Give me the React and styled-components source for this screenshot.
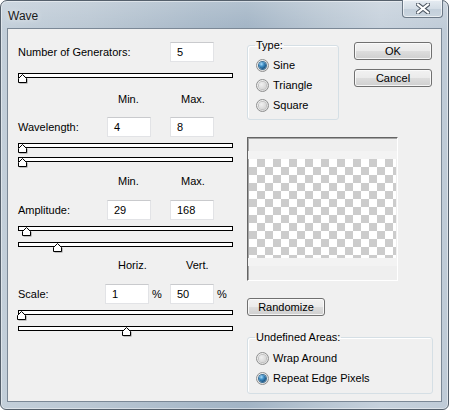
import React from "react";
import styled, { createGlobalStyle } from "styled-components";

const Global = createGlobalStyle`
  html, body { margin: 0; padding: 0; background: #ffffff; }
  body { font-family: "Liberation Sans", Arial, sans-serif; font-size: 11px; color: #000; }
  * { box-sizing: border-box; }
`;

const Window = styled.div`
  width: 449px;
  height: 410px;
  border: 1px solid #55606c;
  border-radius: 7px 7px 6px 6px;
  padding: 0 6px 7px 6px;
  display: flex;
  flex-direction: column;
  background:
    linear-gradient(180deg, rgba(255,255,255,0.18) 0px, rgba(255,255,255,0) 30px),
    linear-gradient(90deg, #c3cfda 0%, #bac7d3 20%, #a7b8c8 45%, #a2b4c5 55%, #b6c4d1 70%, #c6d1dc 85%, #bfcbd7 100%);
  box-shadow: inset 0 0 0 1px rgba(255,255,255,0.45);
`;

const TitleBar = styled.div`
  height: 27px;
  display: flex;
  justify-content: space-between;
  align-items: flex-start;
`;

const Title = styled.span`
  font-family: "Liberation Sans", Arial, sans-serif;
  font-size: 12px;
  color: #1b1b1b;
  margin: 8px 0 0 1px;
  text-shadow: 0 0 6px rgba(255,255,255,0.8);
`;

const CloseButton = styled.div`
  width: 41px;
  height: 18px;
  margin: -1px -1px 0 0;
  border: 1px solid #6b7886;
  border-top: none;
  border-radius: 0 0 4px 4px;
  background: linear-gradient(180deg, #e6ecf2 0%, #d4dde6 50%, #c3cfdb 51%, #cad5df 100%);
  box-shadow: inset 0 0 0 1px rgba(255,255,255,0.6);
  display: flex;
  align-items: center;
  justify-content: center;
`;

const Client = styled.div`
  flex: 1;
  background: #f0f0f0;
  border: 1px solid #7b8896;
  display: flex;
  align-items: flex-start;
`;

const LeftCol = styled.div`
  width: 215px;
  margin-left: 10px;
  display: flex;
  flex-direction: column;
`;

const RightCol = styled.div`
  width: 187px;
  margin-left: 14px;
  display: flex;
  flex-direction: column;
`;

const InputRow = styled.div`
  height: 20px;
  margin-top: ${(p) => p.$mt}px;
  display: flex;
  align-items: center;
`;

const Label = styled.span`
  width: ${(p) => p.$w}px;
  flex: none;
  white-space: nowrap;
`;

const Field = styled.div`
  width: 44px;
  height: 20px;
  flex: none;
  background: #fff;
  border: 1px solid #e2e3e6;
  border-top-color: #c9cacd;
  padding-left: 6px;
  display: flex;
  align-items: center;
  margin-left: ${(p) => p.$ml || 0}px;
`;

const Unit = styled.span`
  margin-left: 3px;
  width: ${(p) => p.$w}px;
  flex: none;
`;

const HeaderRow = styled.div`
  height: 14px;
  margin-top: ${(p) => p.$mt}px;
  display: grid;
  grid-template-columns: ${(p) => p.$a}px ${(p) => p.$b}px auto;
  align-items: center;
`;

const Track = styled.div`
  position: relative;
  height: 5px;
  margin-top: ${(p) => p.$mt}px;
  background: #fff;
  border: 1px solid #000;
`;

const ThumbWrap = styled.svg`
  position: absolute;
  top: 0px;
  width: 10px;
  height: 10px;
`;

const Thumb = ({ x }) => (
  <ThumbWrap viewBox="0 0 10 10" style={{ left: x }}>
    <polygon points="1.5,9.5 9.5,9.5 9.5,5 5.5,1 1.5,5" fill="#8a8a8a" />
    <polygon points="0.5,8.5 8.5,8.5 8.5,4.5 4.5,0.5 0.5,4.5" fill="#fff" stroke="#000" strokeWidth="1" />
  </ThumbWrap>
);

const Slider = ({ mt, pos }) => (
  <Track $mt={mt}>
    <Thumb x={pos} />
  </Track>
);

const TopRow = styled.div`
  margin-top: 10px;
  display: flex;
  align-items: flex-start;
`;

const Group = styled.fieldset`
  margin: ${(p) => p.$mt || 0}px 0 0 0;
  width: ${(p) => p.$w}px;
  border: 1px solid #d5dfe5;
  border-radius: 3px;
  padding: ${(p) => p.$pt}px 0 ${(p) => p.$pb}px 8px;
  box-shadow: inset 1px 1px 0 #fff;
  min-width: 0;
`;

const Legend = styled.legend`
  font-size: 11px;
  line-height: 12px;
  padding: 0 1px;
  margin-left: -1px;
  color: #000;
`;

const RadioRow = styled.div`
  height: ${(p) => p.$h}px;
  display: flex;
  align-items: center;
  gap: 4px;
`;

const RadioDot = styled.span`
  width: 13px;
  height: 13px;
  border-radius: 50%;
  flex: none;
  border: 1px solid #8e8f8f;
  background: radial-gradient(circle at 35% 35%, #fbfbfb 0%, #e8e8e8 50%, #d0d0d0 100%);
  display: flex;
  align-items: center;
  justify-content: center;
  &::after {
    content: "";
    width: 7px;
    height: 7px;
    border-radius: 50%;
    background: ${(p) =>
      p.$on
        ? "radial-gradient(circle at 35% 30%, #a9dcfb 0%, #3f8fc6 35%, #154f7e 75%, #0c3a5e 100%)"
        : "radial-gradient(circle at 35% 35%, #f0f0f0 0%, #dcdcdc 60%, #c9c9c9 100%)"};
    box-shadow: ${(p) => (p.$on ? "0 0 0 1px #3a6f96" : "0 0 0 1px #c0c0c0")};
  }
`;

const Radio = ({ on, h, children }) => (
  <RadioRow $h={h}>
    <RadioDot $on={on} />
    <span>{children}</span>
  </RadioRow>
);

const ButtonCol = styled.div`
  margin: 3px 0 0 15px;
  display: flex;
  flex-direction: column;
  gap: 9px;
`;

const Button = styled.div`
  width: ${(p) => p.$w}px;
  height: 18px;
  margin-top: ${(p) => p.$mt || 0}px;
  border: 1px solid #707070;
  border-radius: 3px;
  background: linear-gradient(180deg, #f2f2f2 0%, #ebebeb 48%, #dddddd 52%, #cfcfcf 100%);
  box-shadow: inset 0 0 0 1px rgba(252,252,252,0.85);
  display: flex;
  align-items: center;
  justify-content: center;
  font-size: 11px;
`;

const Preview = styled.div`
  margin-top: 17px;
  width: 151px;
  height: 144px;
  border: 1px solid;
  border-color: #646464 #ffffff #ffffff #646464;
  box-shadow: inset 1px 1px 0 #a5a5a5;
  background: #efefef;
  display: flex;
  flex-direction: column;
  padding-top: 21px;
`;

const Band = styled.div`
  height: 8px;
  margin-top: ${(p) => p.$mt || 0}px;
  background: #f3f3f3;
`;

const Checker = styled.div`
  height: 99px;
  margin-left: 1px;
  margin-right: 1px;
  background-image: conic-gradient(#cccccc 0 25%, #ffffff 0 50%, #cccccc 0 75%, #ffffff 0);
  background-size: 16px 16px;
  background-position: 0 0;
`;

const CloseGlyph = () => (
  <svg width="14" height="11" viewBox="0 0 14 11">
    <path d="M2 1.5 L12 9.5 M12 1.5 L2 9.5" stroke="#4a5460" strokeWidth="4.2" strokeLinecap="square" fill="none" />
    <path d="M2 1.5 L12 9.5 M12 1.5 L2 9.5" stroke="#ffffff" strokeWidth="2.2" strokeLinecap="square" fill="none" />
  </svg>
);

export default function App() {
  return (
    <>
      <Global />
      <Window>
        <TitleBar>
          <Title>Wave</Title>
          <CloseButton>
            <CloseGlyph />
          </CloseButton>
        </TitleBar>
        <Client>
          <LeftCol>
            <InputRow $mt={13}>
              <Label $w={152}>Number of Generators:</Label>
              <Field>5</Field>
            </InputRow>
            <Slider mt={11} pos={-1} />

            <HeaderRow $mt={14} $a={100} $b={63}>
              <span />
              <span>Min.</span>
              <span>Max.</span>
            </HeaderRow>
            <InputRow $mt={11}>
              <Label $w={89}>Wavelength:</Label>
              <Field>4</Field>
              <Field $ml={19}>8</Field>
            </InputRow>
            <Slider mt={6} pos={-1} />
            <Slider mt={9} pos={-1} />

            <HeaderRow $mt={12} $a={100} $b={63}>
              <span />
              <span>Min.</span>
              <span>Max.</span>
            </HeaderRow>
            <InputRow $mt={12}>
              <Label $w={89}>Amplitude:</Label>
              <Field>29</Field>
              <Field $ml={19}>168</Field>
            </InputRow>
            <Slider mt={6} pos={3} />
            <Slider mt={11} pos={34} />

            <HeaderRow $mt={11} $a={100} $b={68}>
              <span />
              <span>Horiz.</span>
              <span>Vert.</span>
            </HeaderRow>
            <InputRow $mt={12}>
              <Label $w={87}>Scale:</Label>
              <Field>1</Field>
              <Unit $w={18}>%</Unit>
              <Field>50</Field>
              <Unit $w={12}>%</Unit>
            </InputRow>
            <Slider mt={6} pos={-2} />
            <Slider mt={11} pos={103} />
          </LeftCol>

          <RightCol>
            <TopRow>
              <Group $w={92} $pt={4} $pb={4}>
                <Legend>Type:</Legend>
                <Radio on h={20}>Sine</Radio>
                <Radio h={20}>Triangle</Radio>
                <Radio h={20}>Square</Radio>
              </Group>
              <ButtonCol>
                <Button $w={78}>OK</Button>
                <Button $w={78}>Cancel</Button>
              </ButtonCol>
            </TopRow>

            <Preview>
              <Band $mt={-8} />
              <Checker />
              <Band />
            </Preview>

            <Button $w={78} $mt={17}>Randomize</Button>

            <Group $w={186} $mt={15} $pt={5} $pb={5}>
              <Legend>Undefined Areas:</Legend>
              <Radio h={20}>Wrap Around</Radio>
              <Radio on h={20}>Repeat Edge Pixels</Radio>
            </Group>
          </RightCol>
        </Client>
      </Window>
    </>
  );
}
